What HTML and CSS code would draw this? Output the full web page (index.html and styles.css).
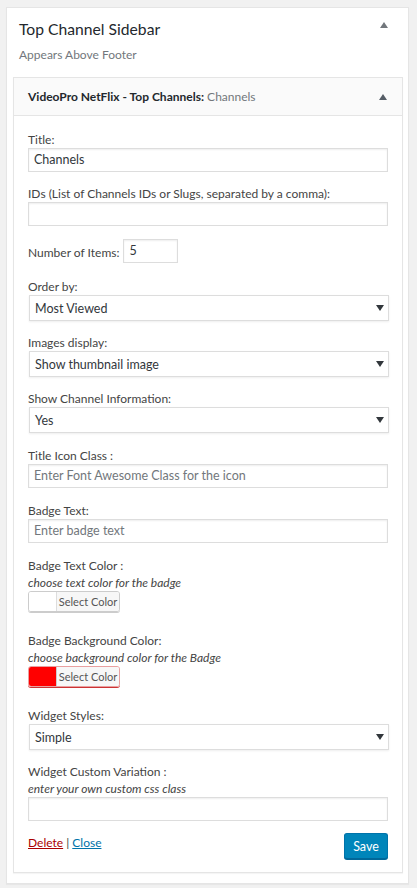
FILE: index.html
```html
<!DOCTYPE html>
<html>
<head>
<meta charset="utf-8">
<link rel="stylesheet" href="styles.css">
</head>
<body>
<div class="sidebar">
  <div class="sidebar-head">
    <div class="sidebar-titles">
      <h2 class="sidebar-title">Top Channel Sidebar</h2>
      <p class="sidebar-desc">Appears Above Footer</p>
    </div>
    <span class="toggle up"></span>
  </div>
  <div class="widget">
    <div class="widget-top">
      <h3 class="widget-title"><strong>VideoPro NetFlix - Top Channels:</strong> <span class="in-title">Channels</span></h3>
      <span class="toggle up small"></span>
    </div>
    <div class="widget-body">
      <div class="field">
        <label class="lbl">Title:</label>
        <div class="input">Channels</div>
      </div>
      <div class="field field-ids">
        <label class="lbl">IDs (List of Channels IDs or Slugs, separated by a comma):</label>
        <div class="input"></div>
      </div>
      <div class="field field-inline">
        <label class="lbl">Number of Items:</label>
        <div class="input input-small">5</div>
      </div>
      <div class="field">
        <label class="lbl">Order by:</label>
        <div class="select"><span>Most Viewed</span><span class="caret"></span></div>
      </div>
      <div class="field">
        <label class="lbl">Images display:</label>
        <div class="select"><span>Show thumbnail image</span><span class="caret"></span></div>
      </div>
      <div class="field field-wide">
        <label class="lbl">Show Channel Information:</label>
        <div class="select"><span>Yes</span><span class="caret"></span></div>
      </div>
      <div class="field field-wide">
        <label class="lbl">Title Icon Class :</label>
        <div class="input placeholder">Enter Font Awesome Class for the icon</div>
      </div>
      <div class="field field-wide">
        <label class="lbl">Badge Text:</label>
        <div class="input placeholder">Enter badge text</div>
      </div>
      <div class="field field-color">
        <label class="lbl">Badge Text Color :</label>
        <em class="hint">choose text color for the badge</em>
        <div class="color-btn"><span class="swatch swatch-white"></span><span class="color-text">Select Color</span></div>
      </div>
      <div class="field field-color">
        <label class="lbl">Badge Background Color:</label>
        <em class="hint">choose background color for the Badge</em>
        <div class="color-btn color-btn-red"><span class="swatch swatch-red"></span><span class="color-text">Select Color</span></div>
      </div>
      <div class="field">
        <label class="lbl">Widget Styles:</label>
        <div class="select"><span>Simple</span><span class="caret"></span></div>
      </div>
      <div class="field field-last">
        <label class="lbl">Widget Custom Variation :</label>
        <em class="hint">enter your own custom css class</em>
        <div class="input"></div>
      </div>
      <div class="widget-actions">
        <div class="links"><a class="delete">Delete</a> | <a class="close">Close</a></div>
        <button class="save">Save</button>
      </div>
    </div>
  </div>
</div>
</body>
</html>
```
FILE: styles.css
```css
html, body {
  margin: 0;
  padding: 0;
  background: #f1f1f1;
  font-family: Lato, "Open Sans", sans-serif;
  font-size: 12px;
  color: #444;
}
.sidebar {
  margin: 7px 8px 5px 6px;
  background: #fff;
  border: 1px solid #e5e5e5;
  box-shadow: 0 1px 1px rgba(0,0,0,.04);
  padding: 0 5px 10px 6px;
}
.sidebar-head {
  display: flex;
  justify-content: space-between;
  align-items: flex-start;
  padding: 11px 6px 0 6px;
  height: 69px;
  box-sizing: border-box;
}
.sidebar-title {
  margin: 0;
  font-size: 15.7px;
  font-weight: 400;
  color: #23282d;
  line-height: 20px;
}
.sidebar-desc {
  margin: 7px 0 0;
  color: #72777c;
  font-size: 12px;
  line-height: 17px;
}
.toggle {
  width: 0;
  height: 0;
  border-left: 4px solid transparent;
  border-right: 4px solid transparent;
  border-bottom: 6px solid #72777c;
  margin-top: 3px;
  margin-right: 9px;
}
.toggle.small {
  margin-top: 0;
  margin-right: 15px;
  border-bottom-color: #555d66;
}
.widget {
  border: 1px solid #e5e5e5;
  background: #fff;
  box-shadow: 0 1px 1px rgba(0,0,0,.04);
}
.widget-top {
  display: flex;
  align-items: center;
  justify-content: space-between;
  height: 37px;
  background: #fafafa;
  border-bottom: 1px solid #e5e5e5;
  padding-left: 14px;
}
.widget-title {
  margin: 0;
  font-size: 12px;
  font-weight: 400;
  color: #23282d;
}
.widget-title strong {
  font-weight: 700;
}
.in-title {
  color: #72777c;
}
.widget-body {
  padding: 16px 14px 13px 14px;
}
.field {
  margin-bottom: 14px;
}
.field-ids {
  margin-bottom: 13px;
}
.field-inline {
  margin-bottom: 16px;
}
.field-wide {
  margin-bottom: 15px;
}
.field-color {
  margin-bottom: 21px;
}
.lbl {
  display: block;
  line-height: 16px;
}
.hint {
  display: block;
  line-height: 17px;
  font-size: 12px;
}
.input {
  box-sizing: border-box;
  height: 24px;
  border: 1px solid #ddd;
  box-shadow: inset 0 1px 2px rgba(0,0,0,.07);
  background: #fff;
  padding: 0 5px;
  font-size: 12.5px;
  line-height: 22px;
  color: #32373c;
  width: 360px;
}
.input.placeholder {
  color: #72777c;
}
.field-inline {
  display: flex;
  align-items: center;
  gap: 4px;
}
.field-inline .lbl {
  display: inline;
  padding-top: 4px;
}
.input-small {
  width: 55px;
}
.select {
  box-sizing: border-box;
  margin-left: 1px;
  height: 26px;
  border: 1px solid #ddd;
  box-shadow: 0 1px 2px rgba(0,0,0,.07);
  background: #fff;
  padding: 0 4px 0 5px;
  font-size: 12.5px;
  color: #32373c;
  display: flex;
  align-items: center;
  justify-content: space-between;
  width: 360px;
}
.caret {
  width: 0;
  height: 0;
  border-left: 4px solid transparent;
  border-right: 4px solid transparent;
  border-top: 6px solid #32373c;
}
.color-btn {
  box-sizing: border-box;
  display: flex;
  width: 92px;
  height: 21px;
  border: 1px solid #ccc;
  border-radius: 3px;
  box-shadow: 0 1px 0 #ccc;
  overflow: hidden;
}
.color-btn-red {
  border-color: #e9a0a0;
  box-shadow: 0 1px 0 #c33;
}
.swatch {
  width: 27px;
  border-right: 1px solid #ddd;
}
.swatch-white { background: #fff; }
.swatch-red { background: #f00; border-right-color: #ccc; }
.color-text {
  flex: 1;
  background: #f7f7f7;
  font-size: 11px;
  color: #555;
  text-align: center;
  line-height: 19px;
}
.field-last {
  margin-bottom: 0;
}
.widget-actions {
  display: flex;
  justify-content: space-between;
  align-items: flex-start;
  margin-top: 12px;
}
.links {
  padding-top: 1px;
  line-height: 17px;
}
.delete {
  color: #a00;
  text-decoration: underline;
}
.close {
  color: #0073aa;
  text-decoration: underline;
}
.save {
  box-sizing: border-box;
  width: 44px;
  height: 26px;
  padding: 0;
  background: #0085ba;
  border: 1px solid #0073aa;
  border-bottom-color: #006799;
  box-shadow: 0 1px 0 #006799;
  border-radius: 3px;
  color: #fff;
  font-family: Lato, "Open Sans", sans-serif;
  font-size: 12.5px;
}
```
